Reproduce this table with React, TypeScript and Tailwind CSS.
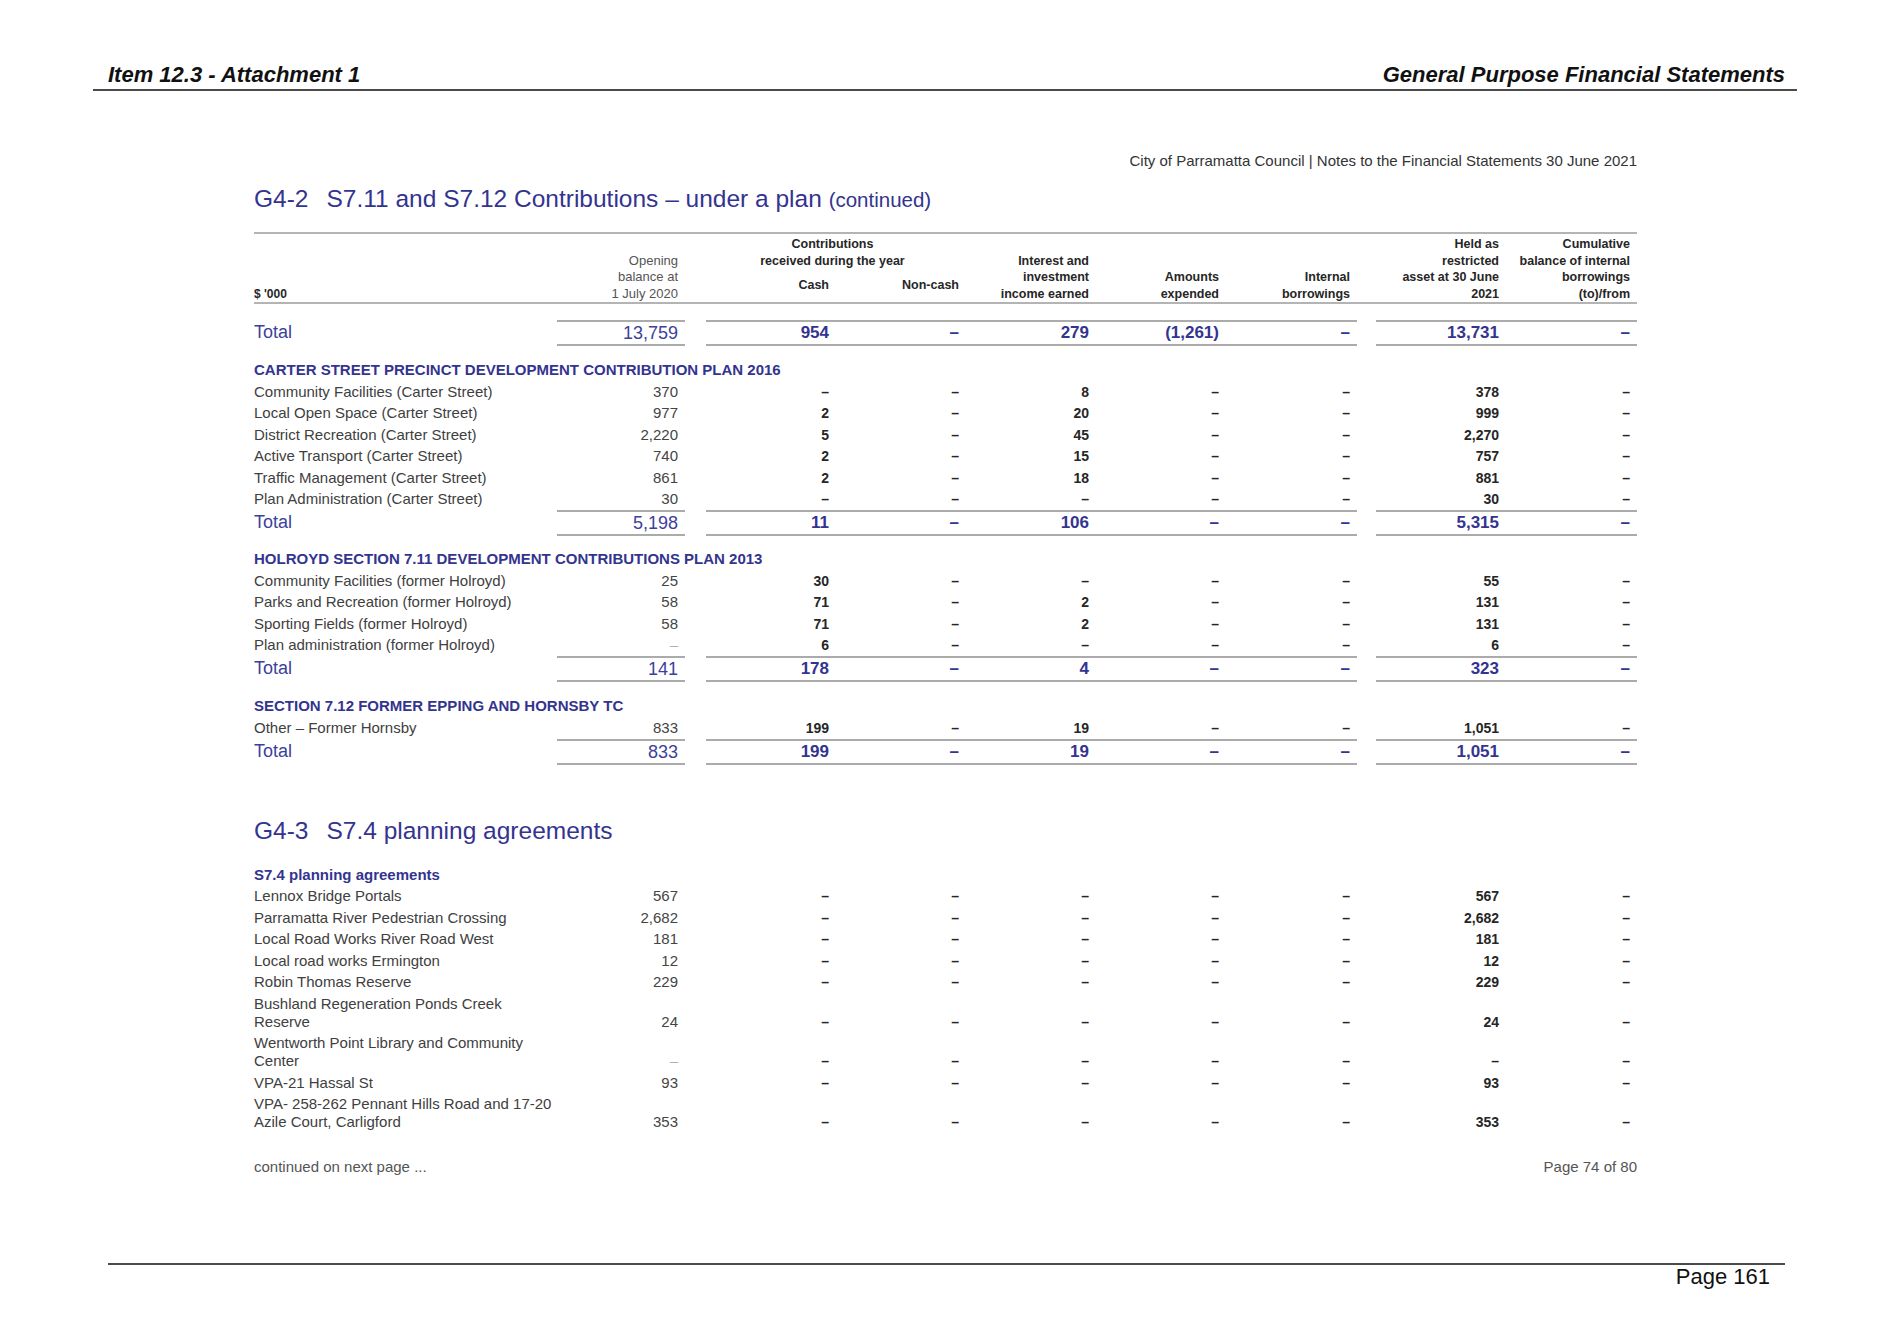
import React from "react";

type Vals = string[];

const GRID = "grid grid-cols-[303px_128px_21px_130px_130px_130px_130px_131px_19px_130px_131px]";
const BLUE = "text-[#33348f]";
const LINE = "border-y-2 border-[#ababab]";

const Cell = ({ value, opening }: { value: string; opening?: boolean }) => {
    if (opening) {
        return (
            <div className={`self-end text-right pr-[7px] py-[1.75px] leading-[18px] text-[15px] ${value === "–" ? "text-[#b0b0b0]" : "text-[#444]"}`}>
                {value}
            </div>
        );
    }
    return (
        <div className="self-end text-right pr-[7px] py-[1.75px] leading-[18px] text-[14px] font-bold text-[#262626]">
            {value}
        </div>
    );
};

const Row = ({ label, v }: { label: string[]; v: Vals }) => (
    <div className={GRID}>
        <div className="py-[1.75px] leading-[18px] text-[15px] text-[#404040] whitespace-nowrap">
            {label.map((l) => (
                <div key={l}>{l}</div>
            ))}
        </div>
        <Cell value={v[0]} opening />
        <div />
        {v.slice(1, 6).map((x, i) => (
            <Cell key={i} value={x} />
        ))}
        <div />
        {v.slice(6).map((x, i) => (
            <Cell key={i} value={x} />
        ))}
    </div>
);

const TotalCell = ({ value }: { value: string }) => (
    <div className={`${LINE} text-right pr-[7px] text-[17px] leading-[22px] font-bold ${BLUE}`}>{value}</div>
);

const TotalRow = ({ v, className }: { v: Vals; className?: string }) => (
    <div className={`${GRID} ${className ?? ""}`}>
        <div className={`py-[1px] text-[18px] leading-[22px] text-[#3c3f9c]`}>Total</div>
        <div className={`${LINE} text-right pr-[7px] text-[18px] leading-[22px] text-[#3c3f9c]`}>{v[0]}</div>
        <div />
        {v.slice(1, 6).map((x, i) => (
            <TotalCell key={i} value={x} />
        ))}
        <div />
        {v.slice(6).map((x, i) => (
            <TotalCell key={i} value={x} />
        ))}
    </div>
);

const Heading = ({ children, className }: { children: React.ReactNode; className?: string }) => (
    <div className={`text-[15px] leading-[22px] font-bold ${BLUE} ${className ?? ""}`}>{children}</div>
);

const carter: [string, Vals][] = [
    ["Community Facilities (Carter Street)", ["370", "–", "–", "8", "–", "–", "378", "–"]],
    ["Local Open Space (Carter Street)", ["977", "2", "–", "20", "–", "–", "999", "–"]],
    ["District Recreation (Carter Street)", ["2,220", "5", "–", "45", "–", "–", "2,270", "–"]],
    ["Active Transport (Carter Street)", ["740", "2", "–", "15", "–", "–", "757", "–"]],
    ["Traffic Management (Carter Street)", ["861", "2", "–", "18", "–", "–", "881", "–"]],
    ["Plan Administration (Carter Street)", ["30", "–", "–", "–", "–", "–", "30", "–"]],
];

const holroyd: [string, Vals][] = [
    ["Community Facilities (former Holroyd)", ["25", "30", "–", "–", "–", "–", "55", "–"]],
    ["Parks and Recreation (former Holroyd)", ["58", "71", "–", "2", "–", "–", "131", "–"]],
    ["Sporting Fields (former Holroyd)", ["58", "71", "–", "2", "–", "–", "131", "–"]],
    ["Plan administration (former Holroyd)", ["–", "6", "–", "–", "–", "–", "6", "–"]],
];

const agreements: [string[], string][] = [
    [["Lennox Bridge Portals"], "567"],
    [["Parramatta River Pedestrian Crossing"], "2,682"],
    [["Local Road Works River Road West"], "181"],
    [["Local road works Ermington"], "12"],
    [["Robin Thomas Reserve"], "229"],
    [["Bushland Regeneration Ponds Creek", "Reserve"], "24"],
    [["Wentworth Point Library and Community", "Center"], "–"],
    [["VPA-21 Hassal St"], "93"],
    [["VPA- 258-262 Pennant Hills Road and 17-20", "Azile Court, Carligford"], "353"],
];

const HeadCell = ({ lines }: { lines: string[] }) => (
    <div className="self-end text-right pr-[7px] text-[12.5px] leading-[16.5px] font-bold text-[#262626] whitespace-nowrap">
        {lines.map((l) => (
            <div key={l}>{l}</div>
        ))}
    </div>
);

const App = () => {
    return (
        <div className="w-[1879px] h-[1329px] bg-white font-['Liberation_Sans',Arial,sans-serif] overflow-hidden">
            {/* page header */}
            <div className="mt-[64px] ml-[93px] w-[1704px] flex justify-between items-end border-b-2 border-[#4a4a4a] pl-[15px] pr-[12px] pb-[3px] text-[22px] leading-[22px] font-bold italic text-[#111]">
                <span>Item 12.3 - Attachment 1</span>
                <span>General Purpose Financial Statements</span>
            </div>

            <div className="ml-[254px] w-[1383px] flex flex-col">
                <div className="mt-[61px] text-right text-[15px] leading-[18px] text-[#333]">
                    City of Parramatta Council | Notes to the Financial Statements 30 June 2021
                </div>

                <div className={`mt-[14px] text-[24.5px] leading-[30px] ${BLUE} whitespace-nowrap`}>
                    <span className="mr-[18px]">G4-2</span>
                    S7.11 and S7.12 Contributions – under a plan <span className="text-[20.5px]">(continued)</span>
                </div>

                {/* table header */}
                <div className={`${GRID} mt-[17px] border-y-2 border-[#b4b4b4] pt-[2px]`}>
                    <div className="self-end text-[12px] leading-[16.5px] font-bold text-[#262626]">$ '000</div>
                    <div className="self-end text-right pr-[7px] text-[13px] leading-[16.5px] text-[#555]">
                        <div>Opening</div>
                        <div>balance at</div>
                        <div>1 July 2020</div>
                    </div>
                    <div />
                    <div className="col-span-2 flex flex-col text-[12.5px] leading-[16.5px] font-bold text-[#262626]">
                        <div className="text-center pr-[7px]">
                            <div>Contributions</div>
                            <div>received during the year</div>
                        </div>
                        <div className="grid grid-cols-2 mt-[8px]">
                            <div className="text-right pr-[7px]">Cash</div>
                            <div className="text-right pr-[7px]">Non-cash</div>
                        </div>
                    </div>
                    <HeadCell lines={["Interest and", "investment", "income earned"]} />
                    <HeadCell lines={["Amounts", "expended"]} />
                    <HeadCell lines={["Internal", "borrowings"]} />
                    <div />
                    <HeadCell lines={["Held as", "restricted", "asset at 30 June", "2021"]} />
                    <HeadCell lines={["Cumulative", "balance of internal", "borrowings", "(to)/from"]} />
                </div>

                <TotalRow className="mt-[16px]" v={["13,759", "954", "–", "279", "(1,261)", "–", "13,731", "–"]} />

                <Heading className="mt-[13px]">CARTER STREET PRECINCT DEVELOPMENT CONTRIBUTION PLAN 2016</Heading>
                {carter.map(([l, v]) => (
                    <Row key={l} label={[l]} v={v} />
                ))}
                <TotalRow v={["5,198", "11", "–", "106", "–", "–", "5,315", "–"]} />

                <Heading className="mt-[12px]">HOLROYD SECTION 7.11 DEVELOPMENT CONTRIBUTIONS PLAN 2013</Heading>
                {holroyd.map(([l, v]) => (
                    <Row key={l} label={[l]} v={v} />
                ))}
                <TotalRow v={["141", "178", "–", "4", "–", "–", "323", "–"]} />

                <Heading className="mt-[13px]">SECTION 7.12 FORMER EPPING AND HORNSBY TC</Heading>
                <Row label={["Other – Former Hornsby"]} v={["833", "199", "–", "19", "–", "–", "1,051", "–"]} />
                <TotalRow v={["833", "199", "–", "19", "–", "–", "1,051", "–"]} />

                <div className={`mt-[51px] text-[24.5px] leading-[30px] ${BLUE}`}>
                    <span className="mr-[18px]">G4-3</span>S7.4 planning agreements
                </div>

                <Heading className="mt-[18px]">S7.4 planning agreements</Heading>
                {agreements.map(([l, val]) => (
                    <Row key={l[0]} label={l} v={[val, "–", "–", "–", "–", "–", val, "–"]} />
                ))}

                <div className="mt-[25px] flex justify-between text-[15px] leading-[18px] text-[#555]">
                    <span>continued on next page ...</span>
                    <span>Page 74 of 80</span>
                </div>
            </div>

            {/* page footer */}
            <div className="mt-[87px] ml-[108px] w-[1677px] border-t-2 border-[#4a4a4a] pt-[1px] pr-[15px] text-right text-[22px] leading-[22px] text-[#111]">
                Page 161
            </div>
        </div>
    );
};

export default App;
